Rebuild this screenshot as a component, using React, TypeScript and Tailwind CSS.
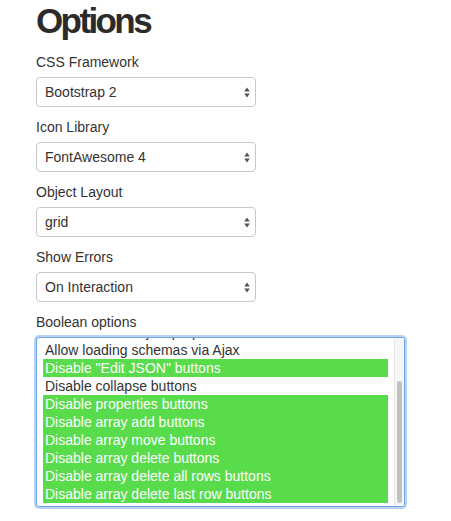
const font = { fontFamily: '"Liberation Sans", Arial, Helvetica, sans-serif' };

const selects = [
  { label: "CSS Framework", value: "Bootstrap 2" },
  { label: "Icon Library", value: "FontAwesome 4" },
  { label: "Object Layout", value: "grid" },
  { label: "Show Errors", value: "On Interaction" },
];

const options = [
  { text: "No additional object properties", on: false },
  { text: "Allow loading schemas via Ajax", on: false },
  { text: 'Disable "Edit JSON" buttons', on: true },
  { text: "Disable collapse buttons", on: false },
  { text: "Disable properties buttons", on: true },
  { text: "Disable array add buttons", on: true },
  { text: "Disable array move buttons", on: true },
  { text: "Disable array delete buttons", on: true },
  { text: "Disable array delete all rows buttons", on: true },
  { text: "Disable array delete last row buttons", on: true },
];

function Arrows() {
  return (
    <svg width="6" height="11" viewBox="0 0 6 11" className="text-[#555]">
      <path d="M3 0.5 L5.8 4.5 L0.2 4.5 Z" fill="currentColor" />
      <path d="M3 10.5 L5.8 6.5 L0.2 6.5 Z" fill="currentColor" />
    </svg>
  );
}

function FakeSelect({ value }: { value: string }) {
  return (
    <div className="flex items-center justify-between w-[220px] h-[30px] border border-[#c8c8c8] rounded-[4px] bg-white pl-[8px] pr-[5px] text-[14px] leading-[20px] text-[#333]">
      <span>{value}</span>
      <Arrows />
    </div>
  );
}

export default function App() {
  return (
    <div className="w-[451px] h-[521px] bg-white pl-[36px] text-[#333]" style={font}>
      <h1 className="text-[35px] font-bold leading-[42px] h-[42px] tracking-[-2.6px] text-[#2b2b2b]">
        Options
      </h1>
      {selects.map((s) => (
        <div key={s.label} className="mt-[10px]">
          <label className="block text-[14px] leading-[20px] mb-[5px]">{s.label}</label>
          <FakeSelect value={s.value} />
        </div>
      ))}
      <div className="mt-[10px]">
        <label className="block text-[14px] leading-[20px] mb-[5px]">Boolean options</label>
        <div className="flex w-[369px] h-[170px] border border-[#6da2e4] rounded-[3px] shadow-[0_0_0_2px_rgba(125,175,238,0.55)] bg-white overflow-hidden">
          <div className="flex-1 overflow-hidden px-[6px]">
            <div className="-mt-[15px]">
              {options.map((o) => (
                <div
                  key={o.text}
                  className={
                    "h-[18px] leading-[18px] pl-[2px] text-[14px] whitespace-nowrap " +
                    (o.on ? "bg-[#59dc4b] text-white" : "text-[#333]")
                  }
                >
                  {o.text}
                </div>
              ))}
            </div>
          </div>
          <div className="w-[10px] border-l border-[#e6e6e6] bg-[#f7f7f7] flex flex-col pt-[43px] pb-[3px] px-[2px]">
            <div className="flex-1 rounded-full bg-[#c1c1c1]" />
          </div>
        </div>
      </div>
    </div>
  );
}
